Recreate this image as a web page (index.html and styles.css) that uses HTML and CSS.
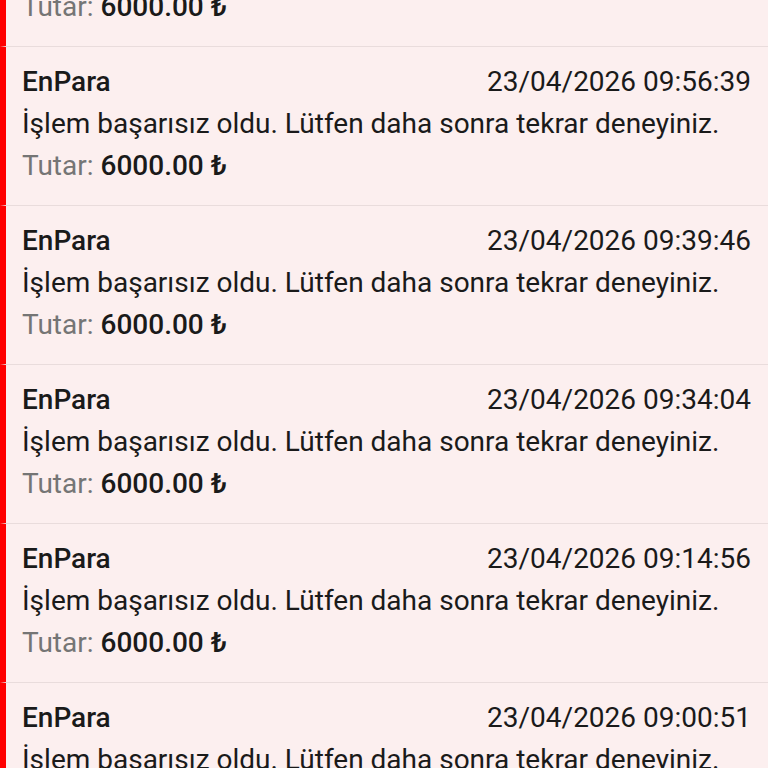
FILE: index.html
```html
<!DOCTYPE html>
<html lang="tr">
<head>
<meta charset="utf-8">
<link rel="stylesheet" href="styles.css">
</head>
<body>
<div class="viewport">
  <ul class="list">
    <li class="item">
      <div class="head"><span class="bank">EnPara</span><span class="date">23/04/2026 10:02:17</span></div>
      <div class="msg">İşlem başarısız oldu. Lütfen daha sonra tekrar deneyiniz.</div>
      <div class="amount"><span class="label">Tutar:</span> <span class="value">6000.00 ₺</span></div>
    </li>
    <li class="item">
      <div class="head"><span class="bank">EnPara</span><span class="date">23/04/2026 09:56:39</span></div>
      <div class="msg">İşlem başarısız oldu. Lütfen daha sonra tekrar deneyiniz.</div>
      <div class="amount"><span class="label">Tutar:</span> <span class="value">6000.00 ₺</span></div>
    </li>
    <li class="item">
      <div class="head"><span class="bank">EnPara</span><span class="date">23/04/2026 09:39:46</span></div>
      <div class="msg">İşlem başarısız oldu. Lütfen daha sonra tekrar deneyiniz.</div>
      <div class="amount"><span class="label">Tutar:</span> <span class="value">6000.00 ₺</span></div>
    </li>
    <li class="item">
      <div class="head"><span class="bank">EnPara</span><span class="date">23/04/2026 09:34:04</span></div>
      <div class="msg">İşlem başarısız oldu. Lütfen daha sonra tekrar deneyiniz.</div>
      <div class="amount"><span class="label">Tutar:</span> <span class="value">6000.00 ₺</span></div>
    </li>
    <li class="item">
      <div class="head"><span class="bank">EnPara</span><span class="date">23/04/2026 09:14:56</span></div>
      <div class="msg">İşlem başarısız oldu. Lütfen daha sonra tekrar deneyiniz.</div>
      <div class="amount"><span class="label">Tutar:</span> <span class="value">6000.00 ₺</span></div>
    </li>
    <li class="item">
      <div class="head"><span class="bank">EnPara</span><span class="date">23/04/2026 09:00:51</span></div>
      <div class="msg">İşlem başarısız oldu. Lütfen daha sonra tekrar deneyiniz.</div>
      <div class="amount"><span class="label">Tutar:</span> <span class="value">6000.00 ₺</span></div>
    </li>
  </ul>
</div>
</body>
</html>
```
FILE: styles.css
```css
html, body {
  margin: 0;
  padding: 0;
  background: #fcefef;
  height: 100%;
  overflow: hidden;
}
.viewport {
  height: 768px;
  overflow: hidden;
}
.list {
  list-style: none;
  margin: -112px 0 0 0;
  padding: 0;
  font-family: Roboto, "Noto Sans", sans-serif;
  font-size: 28px;
  color: #1a1a1a;
}
.item {
  box-sizing: border-box;
  height: 159px;
  background: #fcefef;
  border-left: 6px solid #ff0000;
  border-bottom: 1px solid #e9dcdc;
  padding: 14px 17px 0 16px;
  line-height: 42px;
}
.head {
  display: flex;
  justify-content: space-between;
  align-items: baseline;
}
.bank {
  font-weight: 500;
}
.date {
  font-weight: 400;
}
.msg {
  white-space: nowrap;
}
.label {
  color: #757575;
}
.value {
  font-weight: 500;
}
```
